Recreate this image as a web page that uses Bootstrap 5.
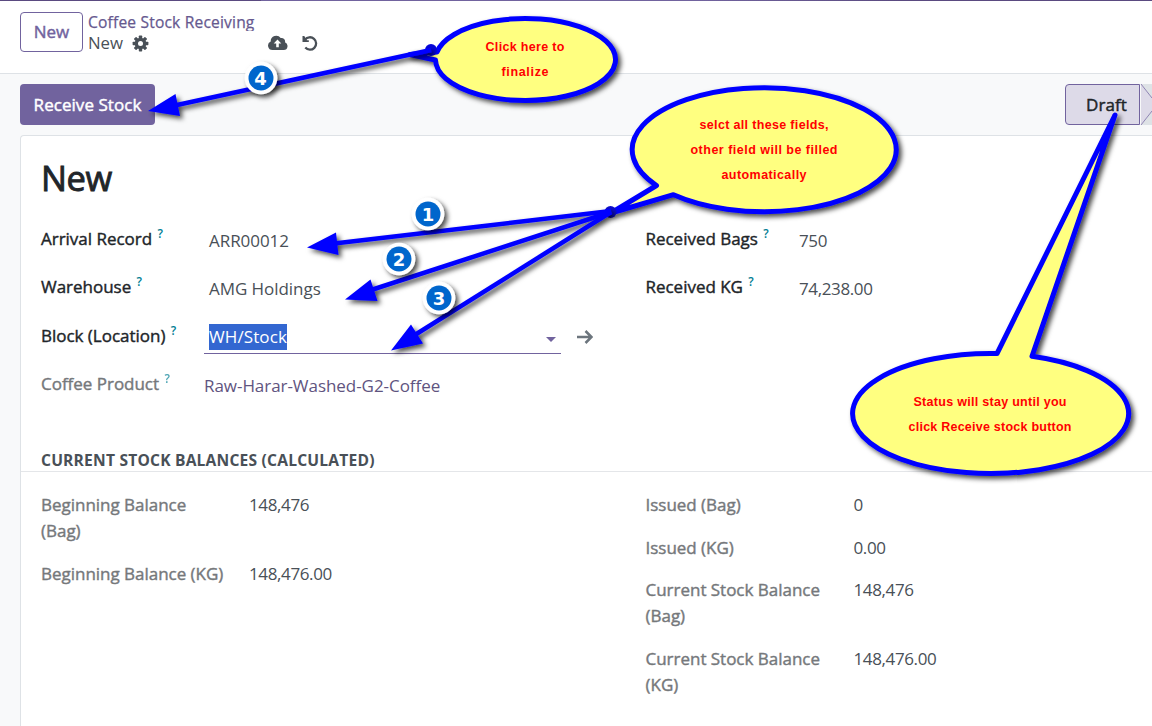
<!DOCTYPE html>
<html lang="en">
<head>
<meta charset="utf-8">
<meta name="viewport" content="width=device-width, initial-scale=1">
<title>Coffee Stock Receiving</title>
<link href="https://cdn.jsdelivr.net/npm/bootstrap@5.3.0/dist/css/bootstrap.min.css" rel="stylesheet">
<style>
  :root { --brand: #71639e; --ink: #495057; --rule: #dee2e6; }
  body { font-family: "Open Sans", "Noto Sans", sans-serif; font-size: 17px; line-height: 26.2px; letter-spacing: -.05px; color: var(--ink); background: #f8f9fa; height: 726px; overflow: hidden; }
  .app-line { height: 1px; background: linear-gradient(90deg, #5a4a80 261px, #71639e 261px, #71639e 700px, #5a4a80 900px); }
  .control-bar { height: 73px; border-bottom: 1px solid var(--rule); padding: 11px 20px 0; }
  .btn { font-size: 17px; letter-spacing: .05px; -webkit-text-stroke: .45px; border-radius: 4px; padding: 0; line-height: 26px; }
  .btn-new { width: 63px; height: 40px; color: var(--brand); border-color: var(--brand); }
  .crumbs { width: 168px; margin-left: 5px; }
  .crumb-top { color: #66598f; font-size: 15.6px; letter-spacing: .17px; -webkit-text-stroke: .25px; line-height: 20px; height: 19px; overflow: hidden; white-space: nowrap; }
  .crumb-now { font-size: 16.8px; line-height: 24px; }
  .crumb-now svg { margin-left: 9px; }
  .save-icons { margin-top: 23px; margin-left: 12px; gap: 14px; }
  .status-row { height: 61px; padding: 10px 0 0 20px; }
  .btn-receive { width: 135px; height: 41px; background: var(--brand); color: #fff; padding-top: 1px; }
  .stage { width: 75px; height: 41px; border: 1px solid var(--brand); border-radius: 4px 0 0 4px; background: #dddae8; color: #212529; -webkit-text-stroke: .45px; letter-spacing: .1px; padding: 7px 0 0 20px; }
  .form-sheet { margin-left: 20px; height: 620px; background: #fff; border: 1px solid var(--rule); border-right: 0; border-radius: 4px 0 0 0; }
  h1 { font-size: 34.5px; font-weight: 400; -webkit-text-stroke: .9px; color: #212529; letter-spacing: -.4px; line-height: 42px; margin: 21px 0 0 20px; }
  .pair { display: grid; grid-template-columns: 604.5px 1fr; padding-left: 20px; }
  .main-group { margin-top: 27px; height: 194px; }
  .line { height: 48.4px; }
  .lbl { color: #212529; -webkit-text-stroke: .4px; letter-spacing: -.02px; white-space: nowrap; }
  .soft { color: #75787b; }
  .lbl sup { font-size: 12px; font-weight: 600; -webkit-text-stroke: 0; color: #017e94; top: -7px; margin-left: 1px; line-height: 0; vertical-align: baseline; }
  .soft sup { opacity: .7; }
  .left .lbl { width: 163px; } .right .lbl { width: 153.5px; }
  .val { padding-top: 2px; }
  .digits { letter-spacing: -.38px; }
  .left .val { padding-left: 5px; }
  .picker { width: 357px; height: 31px; border-bottom: 1px solid var(--brand); padding: 1px 5px 0; }
  .picked { background: #3367d1; color: #fff; line-height: 26px; height: 26px; width: 78px; letter-spacing: .1px; white-space: nowrap; }
  .left .plain { padding-left: 0; color: #5f5480; }
  .section-name { font-size: 15.6px; font-weight: 700; letter-spacing: .2px; line-height: 22px; height: 23px; margin-top: 29px; padding-left: 20px; border-bottom: 1px solid #e4e6e9; }
  .totals { padding-top: 20px; }
  .total { margin-bottom: 16.5px; line-height: 26px; }
  .total .lbl { width: 208px; padding-right: 28px; white-space: normal; }
  .total .one-line { white-space: nowrap; padding-right: 0; }
  .markup { position: absolute; left: 0; top: 0; pointer-events: none; }
  .note { font: 700 12.5px "Liberation Sans", sans-serif; fill: #f00; text-anchor: middle; letter-spacing: 0; }
  .num { font: 700 18px "DejaVu Sans", sans-serif; fill: #fff; text-anchor: middle; letter-spacing: 0; }
</style>
</head>
<body class="position-relative">
<div class="app-line"></div>
<header class="control-bar bg-white d-flex align-items-start">
  <button class="btn btn-new bg-white">New</button>
  <div class="crumbs">
    <div class="crumb-top">Coffee Stock Receiving</div>
    <div class="crumb-now d-flex align-items-center">New
      <svg width="17" height="17" viewBox="-8.5 -8.5 17 17"><g fill="#495057"><g id="teeth"><rect x="-1.7" y="-7.9" width="3.4" height="15.8" rx=".7"/><rect x="-7.9" y="-1.7" width="15.8" height="3.4" rx=".7"/></g><use href="#teeth" transform="rotate(45)"/></g><circle r="4.1" fill="none" stroke="#495057" stroke-width="3.4"/><circle r="2.5" fill="#fff"/></svg>
    </div>
  </div>
  <div class="save-icons d-flex">
    <svg width="20" height="16" viewBox="0 0 20 16"><path fill="#495057" d="M4.5 15A4.5 4.500 0 0 1 2.700 6.400A5.500 5.500 0 0 1 12.700 3.100A3.500 3.500 0 0 1 17 7.300A4 4 0 0 1 15.800 15Z"/><path fill="#fff" d="M9.5 4.500L13.300 8.500H10.800V12.200H8.200V8.500H5.700Z"/></svg>
    <svg width="17" height="17" viewBox="0 0 17 17"><path d="M3 4.7A6.200 6.200 0 1 1 3.300 12.600" fill="none" stroke="#495057" stroke-width="2.300"/><path fill="#495057" d="M.5 1V7H6.800V5.200H4.800L2.300 1Z"/></svg>
  </div>
</header>
<div class="status-row d-flex justify-content-between align-items-start">
  <button class="btn btn-receive">Receive Stock</button>
  <div class="d-flex">
    <div class="stage">Draft</div>
    <svg width="12" height="41" viewBox="0 0 12 41"><path fill="#dddae8" d="M1 0L12 14V27L1 41Z"/><path fill="#dee2e6" d="M1 0H12V14ZM1 41H12V27Z"/><path d="M1 0L12 14M1 41L12 27" stroke="#8f84b3" fill="none"/></svg>
  </div>
</div>
<main class="form-sheet">
  <h1>New</h1>
  <div class="pair main-group">
    <div class="left">
      <div class="line d-flex"><div class="lbl">Arrival Record <sup>?</sup></div><div class="val">ARR00012</div></div>
      <div class="line d-flex"><div class="lbl">Warehouse <sup>?</sup></div><div class="val">AMG Holdings</div></div>
      <div class="line d-flex"><div class="lbl">Block (Location) <sup>?</sup></div>
        <div class="picker d-flex justify-content-between"><span class="picked">WH/Stock</span><svg class="mt-2" width="10" height="16" viewBox="0 0 10 16"><path fill="#71639e" d="M0 5H10L5 10Z"/></svg></div>
        <svg class="ms-3" width="16" height="26" viewBox="0 0 16 26"><path d="M0 14H14M8.500 8L14.500 14L8.500 20" fill="none" stroke="#6c757d" stroke-width="2.500"/></svg>
      </div>
      <div class="line d-flex"><div class="lbl soft">Coffee Product <sup>?</sup></div><div class="val plain">Raw-Harar-Washed-G2-Coffee</div></div>
    </div>
    <div class="right">
      <div class="line d-flex"><div class="lbl">Received Bags <sup>?</sup></div><div class="val digits">750</div></div>
      <div class="line d-flex"><div class="lbl">Received KG <sup>?</sup></div><div class="val digits">74,238.00</div></div>
    </div>
  </div>
  <div class="section-name">CURRENT STOCK BALANCES (CALCULATED)</div>
  <div class="pair totals">
    <div>
      <div class="total d-flex"><div class="lbl soft">Beginning Balance (Bag)</div><div class="digits">148,476</div></div>
      <div class="total d-flex"><div class="lbl soft one-line">Beginning Balance (KG)</div><div class="digits">148,476.00</div></div>
    </div>
    <div>
      <div class="total d-flex"><div class="lbl soft">Issued (Bag)</div><div class="digits">0</div></div>
      <div class="total d-flex"><div class="lbl soft">Issued (KG)</div><div class="digits">0.00</div></div>
      <div class="total d-flex"><div class="lbl soft">Current Stock Balance (Bag)</div><div class="digits">148,476</div></div>
      <div class="total d-flex"><div class="lbl soft">Current Stock Balance (KG)</div><div class="digits">148,476.00</div></div>
    </div>
  </div>
</main>

<!-- Tutorial annotations lying over the form -->
<svg class="markup" width="1152" height="726" viewBox="0 0 1152 726">
  <defs><filter id="sh" filterUnits="userSpaceOnUse" x="0" y="0" width="1152" height="726"><feDropShadow dx="3" dy="3" stdDeviation="2.5" flood-color="#000" flood-opacity=".7"/></filter></defs>
  <g fill="#ffff80" stroke="#00f" stroke-width="5" stroke-linejoin="round">
    <path filter="url(#sh)" d="M437 52A90 41 0 1 1 435.500 60L410 54.500Z"/>
    <path filter="url(#sh)" d="M656.5 185.500A132 62 0 1 1 673.500 194.700L611 213Z"/>
    <path filter="url(#sh)" d="M1032 356.300A138 60 0 1 1 997 353.600L1115 115Z"/>
  </g>
  <circle cx="610.500" cy="212" r="6" fill="#0c0ccc"/>
  <circle cx="431" cy="50" r="6" fill="#0505d8"/>
  <g filter="url(#sh)" fill="#00f" stroke="#00f">
    <g stroke-width="4.500" fill="none"><path d="M431 50L170 106.500"/><path d="M611 211L330 244"/><path d="M611 212L365 292"/><path d="M611 212L410 338"/></g>
    <path stroke="none" d="M148 111L175.500 94L180 116ZM307 247.500L336 232.500L338.500 255ZM345 299.500L370.500 279.500L377.500 301ZM391 350.500L411 324.500L423 343.500Z"/>
  </g>
  <g filter="url(#sh)" fill="#fff"><circle cx="428" cy="214" r="16.300"/><circle cx="399" cy="259" r="16.300"/><circle cx="439" cy="298" r="16.300"/><circle cx="261" cy="78" r="16.300"/></g>
  <g fill="#06c"><circle cx="428" cy="214" r="12.500"/><circle cx="399" cy="259" r="12.500"/><circle cx="439" cy="298" r="12.500"/><circle cx="261" cy="78" r="12.500"/></g>
  <g class="num"><text x="428" y="220.500">1</text><text x="399" y="265.500">2</text><text x="439" y="304.500">3</text><text x="260.500" y="84.500">4</text></g>
  <g class="note">
    <text x="525" y="51" textLength="79">Click here to</text><text x="525" y="76" textLength="47">finalize</text>
    <text x="764" y="129" textLength="129">selct all these fields,</text><text x="764" y="154" textLength="147">other field will be filled</text><text x="764" y="179" textLength="85">automatically</text>
    <text x="990" y="406" textLength="153">Status will stay until you</text><text x="990" y="431" textLength="163">click Receive stock button</text>
  </g>
</svg>
<script src="https://cdn.jsdelivr.net/npm/bootstrap@5.3.0/dist/js/bootstrap.bundle.min.js"></script>
</body>
</html>
